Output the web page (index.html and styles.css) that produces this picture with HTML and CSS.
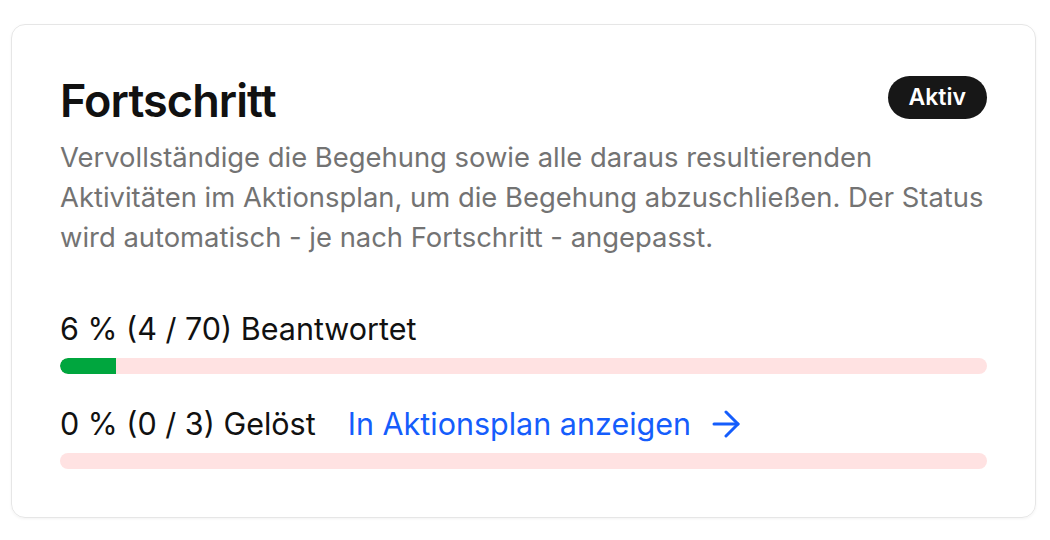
FILE: index.html
```html
<!DOCTYPE html>
<html lang="de">
<head>
  <meta charset="UTF-8" />
  <meta name="viewport" content="width=device-width, initial-scale=1.0" />
  <title>Fortschritt</title>
  <link rel="stylesheet" href="styles.css">
</head>
<body>
  <div class="card">
    <div class="card-header">
      <h2 class="title">Fortschritt</h2>
      <span class="badge">Aktiv</span>
    </div>
    <p class="description">
      Vervollständige die Begehung sowie alle daraus resultierenden Aktivitäten im Aktionsplan, um die Begehung abzuschließen. Der Status wird automatisch - je nach Fortschritt - angepasst.
    </p>

    <div class="progress-list">
      <div class="progress-item">
        <div class="progress-label">6 % (4 / 70) Beantwortet</div>
        <div class="progress-track"><div class="progress-fill" style="width: 6%;"></div></div>
      </div>

      <div class="progress-item">
        <div class="progress-label">
          0 % (0 / 3) Gelöst
          <a class="progress-link" href="#">
            In Aktionsplan anzeigen
            <svg class="arrow" width="28" height="28" viewBox="0 0 28 28" fill="none" stroke="currentColor" stroke-width="3" stroke-linecap="round" stroke-linejoin="round">
              <path d="M2 14h24" />
              <path d="M14 2l12 12-12 12" />
            </svg>
          </a>
        </div>
        <div class="progress-track"><div class="progress-fill" style="width: 0%;"></div></div>
      </div>
    </div>
  </div>
</body>
</html>
```

FILE: styles.css
```css
body { margin: 0; padding: 24px 14px 21px 11px; font-family: Inter, "Noto Sans", sans-serif; background: #fff; color: #111; }
.card { border: 1px solid #e6e6e6; border-radius: 14px; padding: 48px; box-shadow: 0 1px 3px rgba(0, 0, 0, 0.05); }
.card-header { display: flex; justify-content: space-between; align-items: flex-start; }
.title { margin: 0; font-size: 45px; line-height: 55px; font-weight: 600; letter-spacing: -0.9px; color: #111; }
.badge { margin-top: 3px; background: #171717; color: #fff; font-size: 23px; font-weight: 600; height: 43px; line-height: 43px; padding: 0 21px; border-radius: 22px; }
.description { margin: 9px 0 0; font-size: 27.4px; line-height: 40px; color: #737373; max-width: 930px; }
.progress-list { display: flex; flex-direction: column; gap: 30px; margin-top: 52px; }
.progress-label { display: flex; align-items: center; font-size: 30.5px; line-height: 40px; color: #111; }
.progress-link { display: inline-flex; align-items: center; gap: 21px; margin-left: 32px; color: #155dfc; text-decoration: none; }
.progress-track { margin-top: 9px; height: 16px; background: #ffe2e2; border-radius: 8px; overflow: hidden; }
.progress-fill { height: 100%; background: #00a63e; border-radius: 8px 0 0 8px; }
```
